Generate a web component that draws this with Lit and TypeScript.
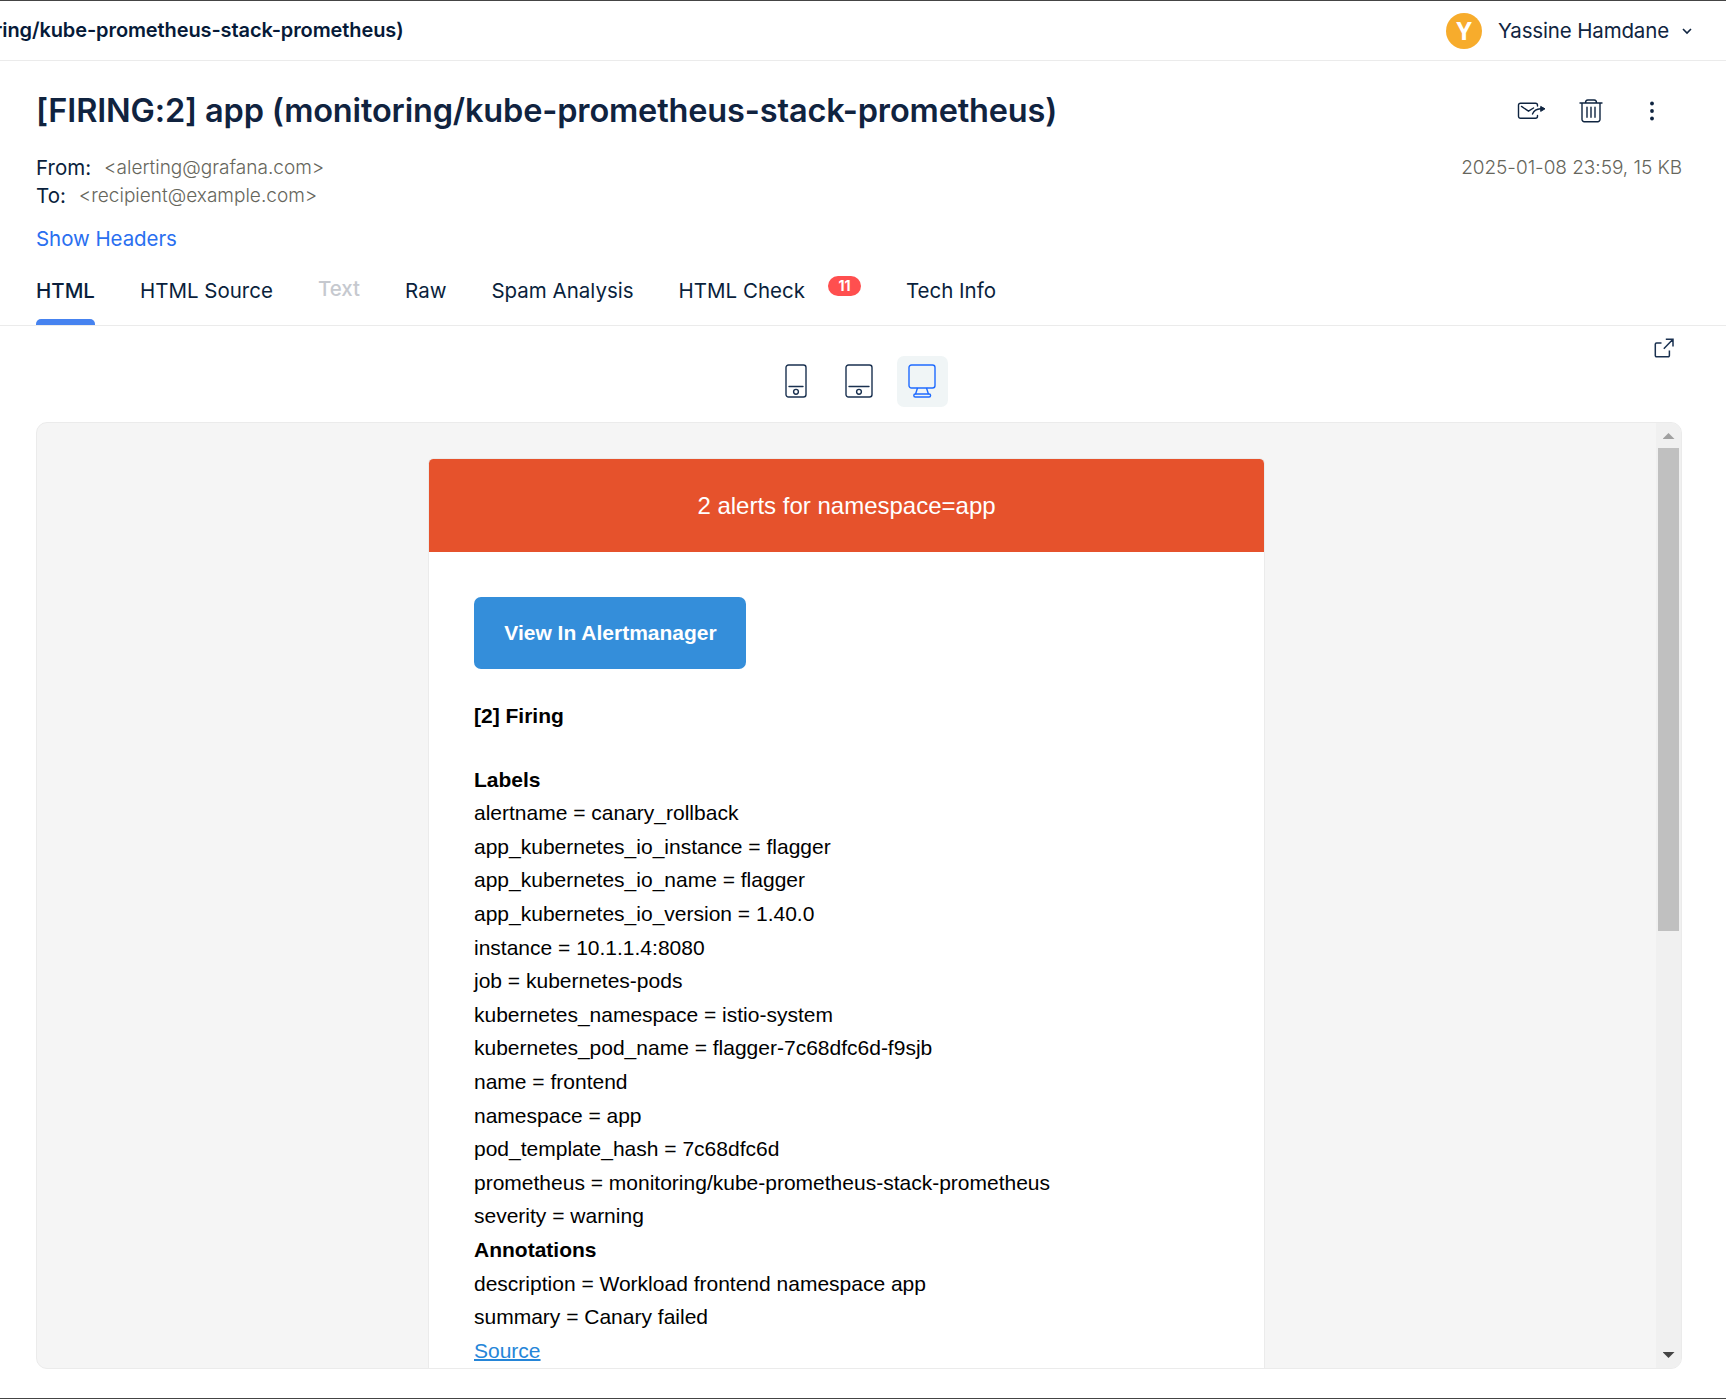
import { LitElement, html, css, svg } from "lit";
import { customElement } from "lit/decorators.js";

const LABELS = [
  "alertname = canary_rollback",
  "app_kubernetes_io_instance = flagger",
  "app_kubernetes_io_name = flagger",
  "app_kubernetes_io_version = 1.40.0",
  "instance = 10.1.1.4:8080",
  "job = kubernetes-pods",
  "kubernetes_namespace = istio-system",
  "kubernetes_pod_name = flagger-7c68dfc6d-f9sjb",
  "name = frontend",
  "namespace = app",
  "pod_template_hash = 7c68dfc6d",
  "prometheus = monitoring/kube-prometheus-stack-prometheus",
  "severity = warning",
];
const ANNOTATIONS = [
  "description = Workload frontend namespace app",
  "summary = Canary failed",
];

const chevron = svg`<svg width="12" height="12" viewBox="0 0 12 12" fill="none" stroke="#0f2440" stroke-width="1.6"><path d="M2 4l4 4 4-4"/></svg>`;
const forward = svg`<svg width="30" height="20" viewBox="0 0 30 20" fill="none" stroke="#0f2440" stroke-width="1.4" stroke-linecap="round" stroke-linejoin="round"><path d="M20.500 14.500v.8a2 2 0 0 1-2 2H3.500a2 2 0 0 1-2-2V4.200a2 2 0 0 1 2-2h15a2 2 0 0 1 2 2v.8"/><path d="M4.500 5.400l7 4.800 5-3.200"/><path d="M15.500 13c1.300-3 4-5 8-5.200"/><path d="M24 5.600l4 2.200-4 2.400z" fill="#0f2440" stroke-width="1"/></svg>`;
const trash = svg`<svg width="24" height="24" viewBox="0 0 24 24" fill="none" stroke="#0f2440" stroke-width="1.400" stroke-linecap="round" stroke-linejoin="round"><path d="M1 4h22M3 4v16.500a2.200 2.200 0 0 0 2.200 2.200h13.600a2.200 2.200 0 0 0 2.200-2.200V4M6.500 4c0-2 .8-3 2.300-3h6.400c1.500 0 2.300 1 2.300 3M8 8.200v10M12 8.200v10M16 8.200v10"/></svg>`;
const dots = svg`<svg width="6" height="20" viewBox="0 0 6 20" fill="#0f2440"><circle cx="3" cy="2.500" r="1.900"/><circle cx="3" cy="10" r="1.900"/><circle cx="3" cy="17.500" r="1.900"/></svg>`;
const phone = svg`<svg width="22" height="34" viewBox="0 0 22 34" fill="none" stroke="#1a3150" stroke-width="1.400" stroke-linecap="round"><rect x="1" y="1" width="20" height="32" rx="2.500"/><path d="M4 22.500h14"/><circle cx="11" cy="27.800" r="2.400"/></svg>`;
const tablet = svg`<svg width="28" height="34" viewBox="0 0 28 34" fill="none" stroke="#1a3150" stroke-width="1.400" stroke-linecap="round"><rect x="1" y="1" width="26" height="32" rx="2.500"/><path d="M4 22.500h20"/><circle cx="14" cy="27.800" r="2.400"/></svg>`;
const desktop = svg`<svg width="28" height="34" viewBox="0 0 28 34" fill="none" stroke="#1f6bff" stroke-width="1.400" stroke-linejoin="round"><rect x="1" y="1" width="26" height="23" rx="2.500"/><path d="M9.500 24l-2 6.200M18.500 24l2 6.200"/><rect x="5.800" y="30" width="16.800" height="3" rx="1.500"/></svg>`;
const external = svg`<svg width="20" height="20" viewBox="0 0 20 20" fill="none" stroke="#1a3150" stroke-width="1.500"><path d="M7.500 5H2.500a1.200 1.200 0 0 0-1.200 1.200v11.300a1.200 1.200 0 0 0 1.200 1.200h11.700a1.200 1.200 0 0 0 1.200-1.200v-5M9.800 10.700L18.700 1.500M11.800 1.200h7.200v7.200"/></svg>`;

@customElement("app-root")
export class AppRoot extends LitElement {
  static styles = css`
    :host { display: block; }
    * { box-sizing: border-box; }
    svg { display: block; flex: none; }
    .page {
      width: 1726px; height: 1399px; overflow: hidden; background: #fff;
      border-top: 1px solid #444; border-bottom: 1px solid #444;
      display: flex; flex-direction: column;
      font: 400 20.500px/28px Inter, sans-serif; color: #0a1f3c;
    }
    .topbar {
      height: 60px; flex: none; border-bottom: 1px solid #ebebeb;
      display: flex; align-items: center; justify-content: space-between;
      padding: 0 33px 0 0;
    }
    .crumb {
      width: 403.500px; display: flex; justify-content: flex-end; overflow: hidden; white-space: nowrap;
      font-size: 20px; letter-spacing: -0.110px; font-weight: 600; color: #061a38; padding-bottom: 1px;
    }
    .user { display: flex; align-items: center; color: #0f2440; }
    .avatar {
      width: 36px; height: 36px; border-radius: 50%; background: #f7ac2c; color: #fff;
      font: 700 25px/35px "Open Sans", sans-serif; text-align: center; margin-right: 16px;
    }
    .username { margin-right: 12px; letter-spacing: -0.150px; }
    .head { padding: 32px 44px 0 36px; display: flex; flex-direction: column; }
    .title-row { display: flex; justify-content: space-between; align-items: center; height: 36px; }
    .title { margin: 0; font-weight: 600; font-size: 32.500px; letter-spacing: -0.160px; line-height: 36px; white-space: nowrap; color: #10233f; }
    .actions { display: flex; align-items: center; padding-right: 27px; }
    .actions svg + svg { margin-left: 32px; }
    .actions svg:last-child { margin-left: 46px; }
    .meta-row { display: flex; justify-content: space-between; margin-top: 25px; }
    .field { display: flex; gap: 13px; color: #0a1f3c; }
    .muted { color: #66665c; font-weight: 300; font-size: 19.050px; }
    .date { letter-spacing: -0.050px; }
    .link { color: #2a6ff0; margin-top: 15px; letter-spacing: -0.070px; }
    .tabs {
      flex: none; height: 73px; border-bottom: 1px solid #ebebeb; padding: 0 36px;
      display: flex; gap: 45px; align-items: stretch;
    }
    .tab { padding-top: 24px; display: flex; white-space: nowrap; }
    .tab.active { font-weight: 500; flex-direction: column; justify-content: space-between; }
    .bar { height: 6px; background: #4683f0; border-radius: 5px 5px 0 0; }
    .tab.disabled { color: #c6c9cf; padding-top: 22px; font-weight: 500; }
    .badge {
      margin: -1px 0 0 23px; width: 33px; height: 20px; border-radius: 10px; background: #ff4f4f; color: #fff;
      font-size: 14px; font-weight: 700; line-height: 19px; text-align: center;
    }
    .toolbar { flex: none; height: 96px; display: grid; grid-template-columns: 1fr auto 1fr; padding: 0 52px 0 44px; }
    .devices { display: flex; gap: 12px; padding-top: 30px; grid-column: 2; }
    .device { width: 51px; height: 51px; border-radius: 7px; display: grid; place-items: center; padding-bottom: 1px; }
    .device.on { background: #f0f5f6; }
    .external { grid-column: 3; justify-self: end; padding-top: 12px; }
    .panel {
      margin: 0 44px 0 36px; height: 947px; flex: none; background: #f5f5f5; border: 1px solid #ebebeb;
      border-radius: 11px; overflow: hidden; display: flex;
    }
    .canvas { flex: 1; display: flex; justify-content: center; align-items: flex-start; padding-top: 36px; }
    .scroll { width: 25px; background: #f0f0f0; display: flex; flex-direction: column; align-items: center; padding: 10px 2px 10px 2px; }
    .up, .down { width: 12px; height: 6px; background: #a0a0a0; clip-path: polygon(50% 0, 100% 100%, 0 100%); }
    .down { background: #444; clip-path: polygon(0 0, 100% 0, 50% 100%); margin-top: auto; }
    .thumb { width: 21px; height: 483px; background: #c0c0c0; margin-top: 9px; }
    .mail {
      width: 835px; height: 1000px; background: #fff; border-radius: 4.500px; box-shadow: 0 0 0 1px #ebebeb;
      font: 400 21px/33.600px "Liberation Sans", Arial, sans-serif; color: #000;
      flex: none;
    }
    .banner { height: 93px; border-radius: 4.500px 4.500px 0 0; background: #e6522c; color: #fff; font-size: 24px; line-height: 94px; text-align: center; }
    .body { padding: 45px; display: flex; flex-direction: column; align-items: flex-start; white-space: nowrap; }
    .btn {
      width: 272px; height: 72px; border-radius: 7px; background: #348eda; color: #fff; font-weight: 700;
      text-align: center; line-height: 71px; flex: none; text-indent: 1px;
    }
    .strong { font-weight: 700; }
    .firing { margin-top: 30px; margin-bottom: 30px; }
    .source { color: #2585d8; text-decoration: underline; text-decoration-thickness: 2px; }
  `;

  render() {
    return html`
      <div class="page">
        <div class="topbar">
          <div class="crumb">[FIRING:2] app (monitoring/kube-prometheus-stack-prometheus)</div>
          <div class="user">
            <div class="avatar">Y</div>
            <span class="username">Yassine Hamdane</span>
            ${chevron}
          </div>
        </div>
        <div class="head">
          <div class="title-row">
            <h1 class="title">[FIRING:2] app (monitoring/kube-prometheus-stack-prometheus)</h1>
            <div class="actions">${forward}${trash}${dots}</div>
          </div>
          <div class="meta-row">
            <div>
              <div class="field"><span>From:</span><span class="muted">&lt;alerting@grafana.com&gt;</span></div>
              <div class="field"><span>To:</span><span class="muted">&lt;recipient@example.com&gt;</span></div>
            </div>
            <span class="muted date">2025-01-08 23:59, 15 KB</span>
          </div>
          <div class="link">Show Headers</div>
        </div>
        <div class="tabs">
          <div class="tab active"><span>HTML</span><div class="bar"></div></div>
          <div class="tab">HTML Source</div>
          <div class="tab disabled">Text</div>
          <div class="tab">Raw</div>
          <div class="tab">Spam Analysis</div>
          <div class="tab">HTML Check<span class="badge">11</span></div>
          <div class="tab">Tech Info</div>
        </div>
        <div class="toolbar">
          <div class="devices">
            <div class="device">${phone}</div>
            <div class="device">${tablet}</div>
            <div class="device on">${desktop}</div>
          </div>
          <div class="external">${external}</div>
        </div>
        <div class="panel">
          <div class="canvas">
            <div class="mail">
              <div class="banner">2 alerts for namespace=app</div>
              <div class="body">
                <div class="btn">View In Alertmanager</div>
                <div class="strong firing">[2] Firing</div>
                <div class="strong">Labels</div>
                ${LABELS.map((t) => html`<div>${t}</div>`)}
                <div class="strong">Annotations</div>
                ${ANNOTATIONS.map((t) => html`<div>${t}</div>`)}
                <div class="source">Source</div>
              </div>
            </div>
          </div>
          <div class="scroll">
            <div class="up"></div>
            <div class="thumb"></div>
            <div class="down"></div>
          </div>
        </div>
      </div>
    `;
  }
}
